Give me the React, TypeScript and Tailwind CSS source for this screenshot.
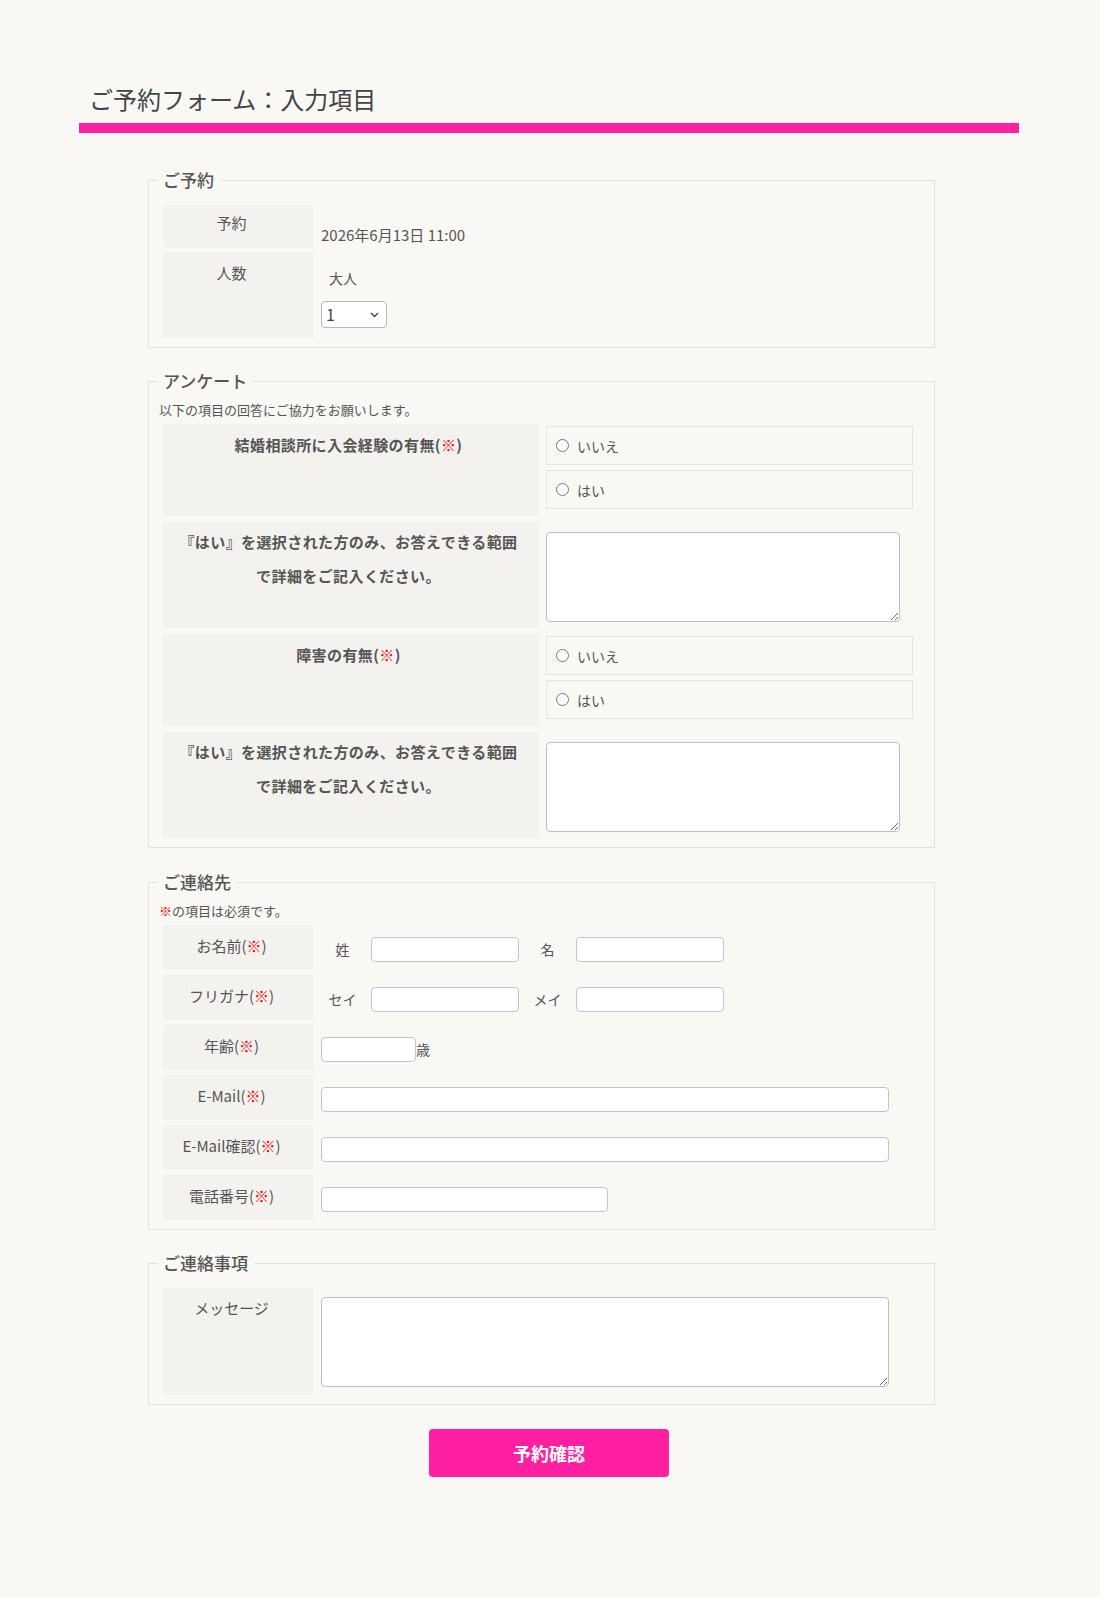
import React from "react";

const Req = () => (
  <>
    (<span className="text-[#ff0000]">※</span>)
  </>
);

const labelCls =
  "w-[151px] shrink-0 bg-[#f4f2ef] pr-[14px] text-center text-[15px] leading-[22px] text-[#555]";

const inputCls =
  "h-[25px] rounded-[4px] border border-[#c4c4c4] bg-white px-[4px] text-[14px] outline-none";

const qLabelCls =
  "w-[376px] shrink-0 bg-[#f4f2ef] pl-[12px] pr-[17px] text-center text-[15px] font-bold leading-[34px] tracking-[0.4px] text-[#555]";

function RadioBox({ name, value, label }: { name: string; value: string; label: string }) {
  return (
    <label className="flex h-[39px] items-center border border-[#e5e4e1] bg-[#f9f8f4] pl-[9px]">
      <input type="radio" name={name} value={value} className="m-0 h-[13px] w-[13px]" />
      <span className="ml-[8px] text-[14px] leading-[20px] text-[#555]">{label}</span>
    </label>
  );
}

function Legend({ children }: { children: React.ReactNode }) {
  return (
    <legend className="ml-[8px] px-[6px] text-[17px] font-medium leading-[24px] text-[#555]">
      {children}
    </legend>
  );
}

export default function App() {
  return (
    <div className="min-h-[1597px] bg-[#f9f8f4] font-['Noto_Sans_CJK_JP','Noto_Sans',sans-serif] text-[#555]">
      <div className="ml-[79px] w-[940px] pt-[81px] pb-[120px]">
        <h1 className="pl-[10px] text-[24px] font-normal leading-[36px] text-[#444]">
          ご予約フォーム：入力項目
        </h1>
        <div className="mt-[6px] h-[10px] bg-[#ff1fa0]" />

        <form className="ml-[69px] w-[787px] pt-[35px]" onSubmit={(e) => e.preventDefault()}>
          {/* ご予約 */}
          <fieldset className="m-0 border border-[#e2e1de] p-0 pb-[9px]">
            <Legend>ご予約</Legend>
            <div className="flex flex-col gap-[5px] pt-[13px] pl-[14px]">
              <div className="flex h-[42px]">
                <div className={labelCls + " pt-[7px]"}>予約</div>
                <div className="pl-[7px] pt-[19px] text-[15px] leading-[22px]">2026年6月13日 11:00</div>
              </div>
              <div className="flex h-[86px]">
                <div className={labelCls + " pt-[10px]"}>人数</div>
                <div className="flex flex-col pl-[7px]">
                  <div className="pl-[8px] pt-[16px] text-[14px] leading-[20px]">大人</div>
                  <div className="relative mt-[13px] h-[27px] w-[66px]">
                    <select
                      defaultValue="1"
                      className="h-full w-full appearance-none rounded-[4px] border border-[#b8b8b8] bg-white pl-[4px] text-[16px] leading-[25px] text-[#444] outline-none"
                    >
                      <option value="1">1</option>
                      <option value="2">2</option>
                      <option value="3">3</option>
                      <option value="4">4</option>
                    </select>
                    <svg
                      className="pointer-events-none absolute right-[8px] top-[11px]"
                      width="9"
                      height="6"
                      viewBox="0 0 9 6"
                      fill="none"
                    >
                      <path d="M1 1l3.5 3.5L8 1" stroke="#444" strokeWidth="1.4" />
                    </svg>
                  </div>
                </div>
              </div>
            </div>
          </fieldset>

          {/* アンケート */}
          <fieldset className="m-0 mt-[21px] border border-[#e2e1de] p-0 pb-[9px]">
            <Legend>アンケート</Legend>
            <div className="pl-[10px] pt-[7px] text-[13px] leading-[20px] text-[#555]">
              以下の項目の回答にご協力をお願いします。
            </div>
            <div className="mt-[4px] flex flex-col gap-[6px] pl-[14px]">
              <div className="flex">
                <div className={qLabelCls + " pt-[4px]"}>
                  結婚相談所に入会経験の有無<Req />
                </div>
                <div className="ml-[7px] flex w-[367px] flex-col gap-[5px] pt-[2px] pb-[7px]">
                  <RadioBox name="q1" value="no" label="いいえ" />
                  <RadioBox name="q1" value="yes" label="はい" />
                </div>
              </div>
              <div className="flex">
                <div className={qLabelCls + " pt-[3px]"}>
                  『はい』を選択された方のみ、お答えできる範囲で詳細をご記入ください。
                </div>
                <div className="ml-[7px] pt-[10px] pb-[6px]">
                  <textarea className="block h-[90px] w-[354px] rounded-[4px] border border-[#bdbdbd] bg-white p-[4px] text-[14px] outline-none" />
                </div>
              </div>
              <div className="flex">
                <div className={qLabelCls + " pt-[4px]"}>
                  障害の有無<Req />
                </div>
                <div className="ml-[7px] flex w-[367px] flex-col gap-[5px] pt-[2px] pb-[7px]">
                  <RadioBox name="q2" value="no" label="いいえ" />
                  <RadioBox name="q2" value="yes" label="はい" />
                </div>
              </div>
              <div className="flex">
                <div className={qLabelCls + " pt-[3px]"}>
                  『はい』を選択された方のみ、お答えできる範囲で詳細をご記入ください。
                </div>
                <div className="ml-[7px] pt-[10px] pb-[6px]">
                  <textarea className="block h-[90px] w-[354px] rounded-[4px] border border-[#bdbdbd] bg-white p-[4px] text-[14px] outline-none" />
                </div>
              </div>
            </div>
          </fieldset>

          {/* ご連絡先 */}
          <fieldset className="m-0 mt-[22px] border border-[#e2e1de] p-0 pb-[9px]">
            <Legend>ご連絡先</Legend>
            <div className="pl-[10px] pt-[7px] text-[13px] leading-[20px] text-[#555]">
              <span className="text-[#ff0000]">※</span>の項目は必須です。
            </div>
            <div className="mt-[4px] flex flex-col gap-[5px] pl-[14px]">
              <div className="flex h-[45px]">
                <div className={labelCls + " pt-[10px]"}>
                  お名前<Req />
                </div>
                <div className="flex items-center pl-[7px] pt-[4px]">
                  <span className="w-[43px] text-center text-[14px]">姓</span>
                  <input type="text" className={inputCls + " ml-[7px] w-[148px]"} />
                  <span className="ml-[7px] w-[43px] text-center text-[14px]">名</span>
                  <input type="text" className={inputCls + " ml-[7px] w-[148px]"} />
                </div>
              </div>
              <div className="flex h-[45px]">
                <div className={labelCls + " pt-[10px]"}>
                  フリガナ<Req />
                </div>
                <div className="flex items-center pl-[7px] pt-[4px]">
                  <span className="w-[43px] text-center text-[14px]">セイ</span>
                  <input type="text" className={inputCls + " ml-[7px] w-[148px]"} />
                  <span className="ml-[7px] w-[43px] text-center text-[14px]">メイ</span>
                  <input type="text" className={inputCls + " ml-[7px] w-[148px]"} />
                </div>
              </div>
              <div className="flex h-[45px]">
                <div className={labelCls + " pt-[10px]"}>
                  年齢<Req />
                </div>
                <div className="flex items-center pl-[7px] pt-[4px]">
                  <input type="text" className={inputCls + " w-[95px]"} />
                  <span className="text-[14px]">歳</span>
                </div>
              </div>
              <div className="flex h-[45px]">
                <div className={labelCls + " pt-[10px]"}>
                  E-Mail<Req />
                </div>
                <div className="flex items-center pl-[7px] pt-[4px]">
                  <input type="email" className={inputCls + " w-[568px]"} />
                </div>
              </div>
              <div className="flex h-[45px]">
                <div className={labelCls + " pt-[10px]"}>
                  E-Mail確認<Req />
                </div>
                <div className="flex items-center pl-[7px] pt-[4px]">
                  <input type="email" className={inputCls + " w-[568px]"} />
                </div>
              </div>
              <div className="flex h-[45px]">
                <div className={labelCls + " pt-[10px]"}>
                  電話番号<Req />
                </div>
                <div className="flex items-center pl-[7px] pt-[4px]">
                  <input type="tel" className={inputCls + " w-[287px]"} />
                </div>
              </div>
            </div>
          </fieldset>

          {/* ご連絡事項 */}
          <fieldset className="m-0 mt-[21px] border border-[#e2e1de] p-0 pb-[9px]">
            <Legend>ご連絡事項</Legend>
            <div className="flex pt-[13px] pl-[14px]">
              <div className={labelCls + " pt-[9px]"}>メッセージ</div>
              <div className="pl-[7px] pt-[9px] pb-[8px]">
                <textarea className="block h-[90px] w-[568px] rounded-[4px] border border-[#bdbdbd] bg-white p-[4px] text-[14px] outline-none" />
              </div>
            </div>
          </fieldset>
        </form>

        <button
          type="button"
          className="mx-auto mt-[24px] block h-[48px] w-[240px] rounded-[4px] bg-[#ff1fa0] text-[18px] font-bold text-white"
        >
          予約確認
        </button>
      </div>
    </div>
  );
}
